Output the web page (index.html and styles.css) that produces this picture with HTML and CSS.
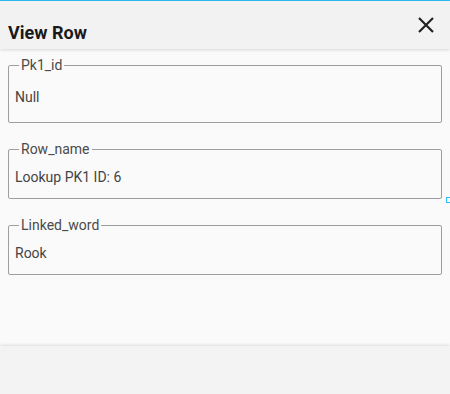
FILE: index.html
```html
<!DOCTYPE html>
<html lang="en">
<head>
<meta charset="UTF-8">
<meta name="viewport" content="width=device-width, initial-scale=1.0">
<title>View Row</title>
<link rel="stylesheet" href="styles.css">
</head>
<body>

  <div class="dialog">
    <div class="dialog-header">
      <h1 class="dialog-title">View Row</h1>
      <button class="close-btn" type="button" aria-label="Close">
        <svg width="24" height="24" viewBox="0 0 24 24">
          <path d="M5 5 L19 19 M19 5 L5 19" stroke="#222" stroke-width="2.2" fill="none"/>
        </svg>
      </button>
    </div>

    <div class="dialog-body">
      <fieldset class="field field-tall">
        <legend class="field-label">Pk1_id</legend>
        <div class="field-value">Null</div>
      </fieldset>

      <fieldset class="field">
        <legend class="field-label">Row_name</legend>
        <div class="field-value">Lookup PK1 ID: 6</div>
      </fieldset>

      <fieldset class="field">
        <legend class="field-label">Linked_word</legend>
        <div class="field-value">Rook</div>
      </fieldset>

      <span class="resize-handle"></span>
    </div>

    <div class="dialog-footer"></div>
  </div>

</body>
</html>
```

FILE: styles.css
```css
* {
  box-sizing: border-box;
}

body {
  margin: 0;
  background-color: #fafafa;
  font-family: Roboto, "Noto Sans", sans-serif;
  color: #444;
}

.dialog {
  display: flex;
  flex-direction: column;
  height: 394px;
  border-top: 1px solid #2bbcf5; /* linea azul de arriba */
}

.dialog-header {
  position: relative;
  z-index: 1;
  display: flex;
  align-items: center;
  justify-content: space-between;
  height: 48px;
  padding: 0 12px 0 8px;
  background-color: #f2f2f2;
  box-shadow: 0 1px 3px rgba(0, 0, 0, 0.14);
}

.dialog-title {
  margin: 0;
  padding-top: 14px;
  font-size: 18px;
  font-weight: bold;
  color: #1a1a1a;
}

.close-btn {
  display: flex;
  padding: 0;
  border: none;
  background: none;
  cursor: pointer;
}

.dialog-body {
  position: relative;
  flex: 1;
  display: flex;
  flex-direction: column;
  gap: 18px;
  padding: 8px 8px 0 8px;
}

.field {
  margin: 0;
  padding: 0 6px 13px 6px;
  border: 1px solid #9e9e9e;
  border-radius: 2px;
}

.field-tall {
  padding-bottom: 17px;
}

.field-label {
  margin-left: 4px;
  padding: 0 2px;
  font-size: 14px;
  line-height: 16px;
  color: #4a4a4a;
}

.field-value {
  margin-top: 12px;
  font-size: 14px;
  line-height: 16px;
  color: #444;
}

.field-tall .field-value {
  margin-top: 16px;
}

/* cuadrito azul de la derecha */
.resize-handle {
  position: absolute;
  left: 446px;
  top: 148px;
  width: 6px;
  height: 6px;
  border: 1px solid #2bbcf5;
}

.dialog-footer {
  height: 48px;
  background-color: #f3f3f3;
  box-shadow: 0 -1px 3px rgba(0, 0, 0, 0.12);
}
```
